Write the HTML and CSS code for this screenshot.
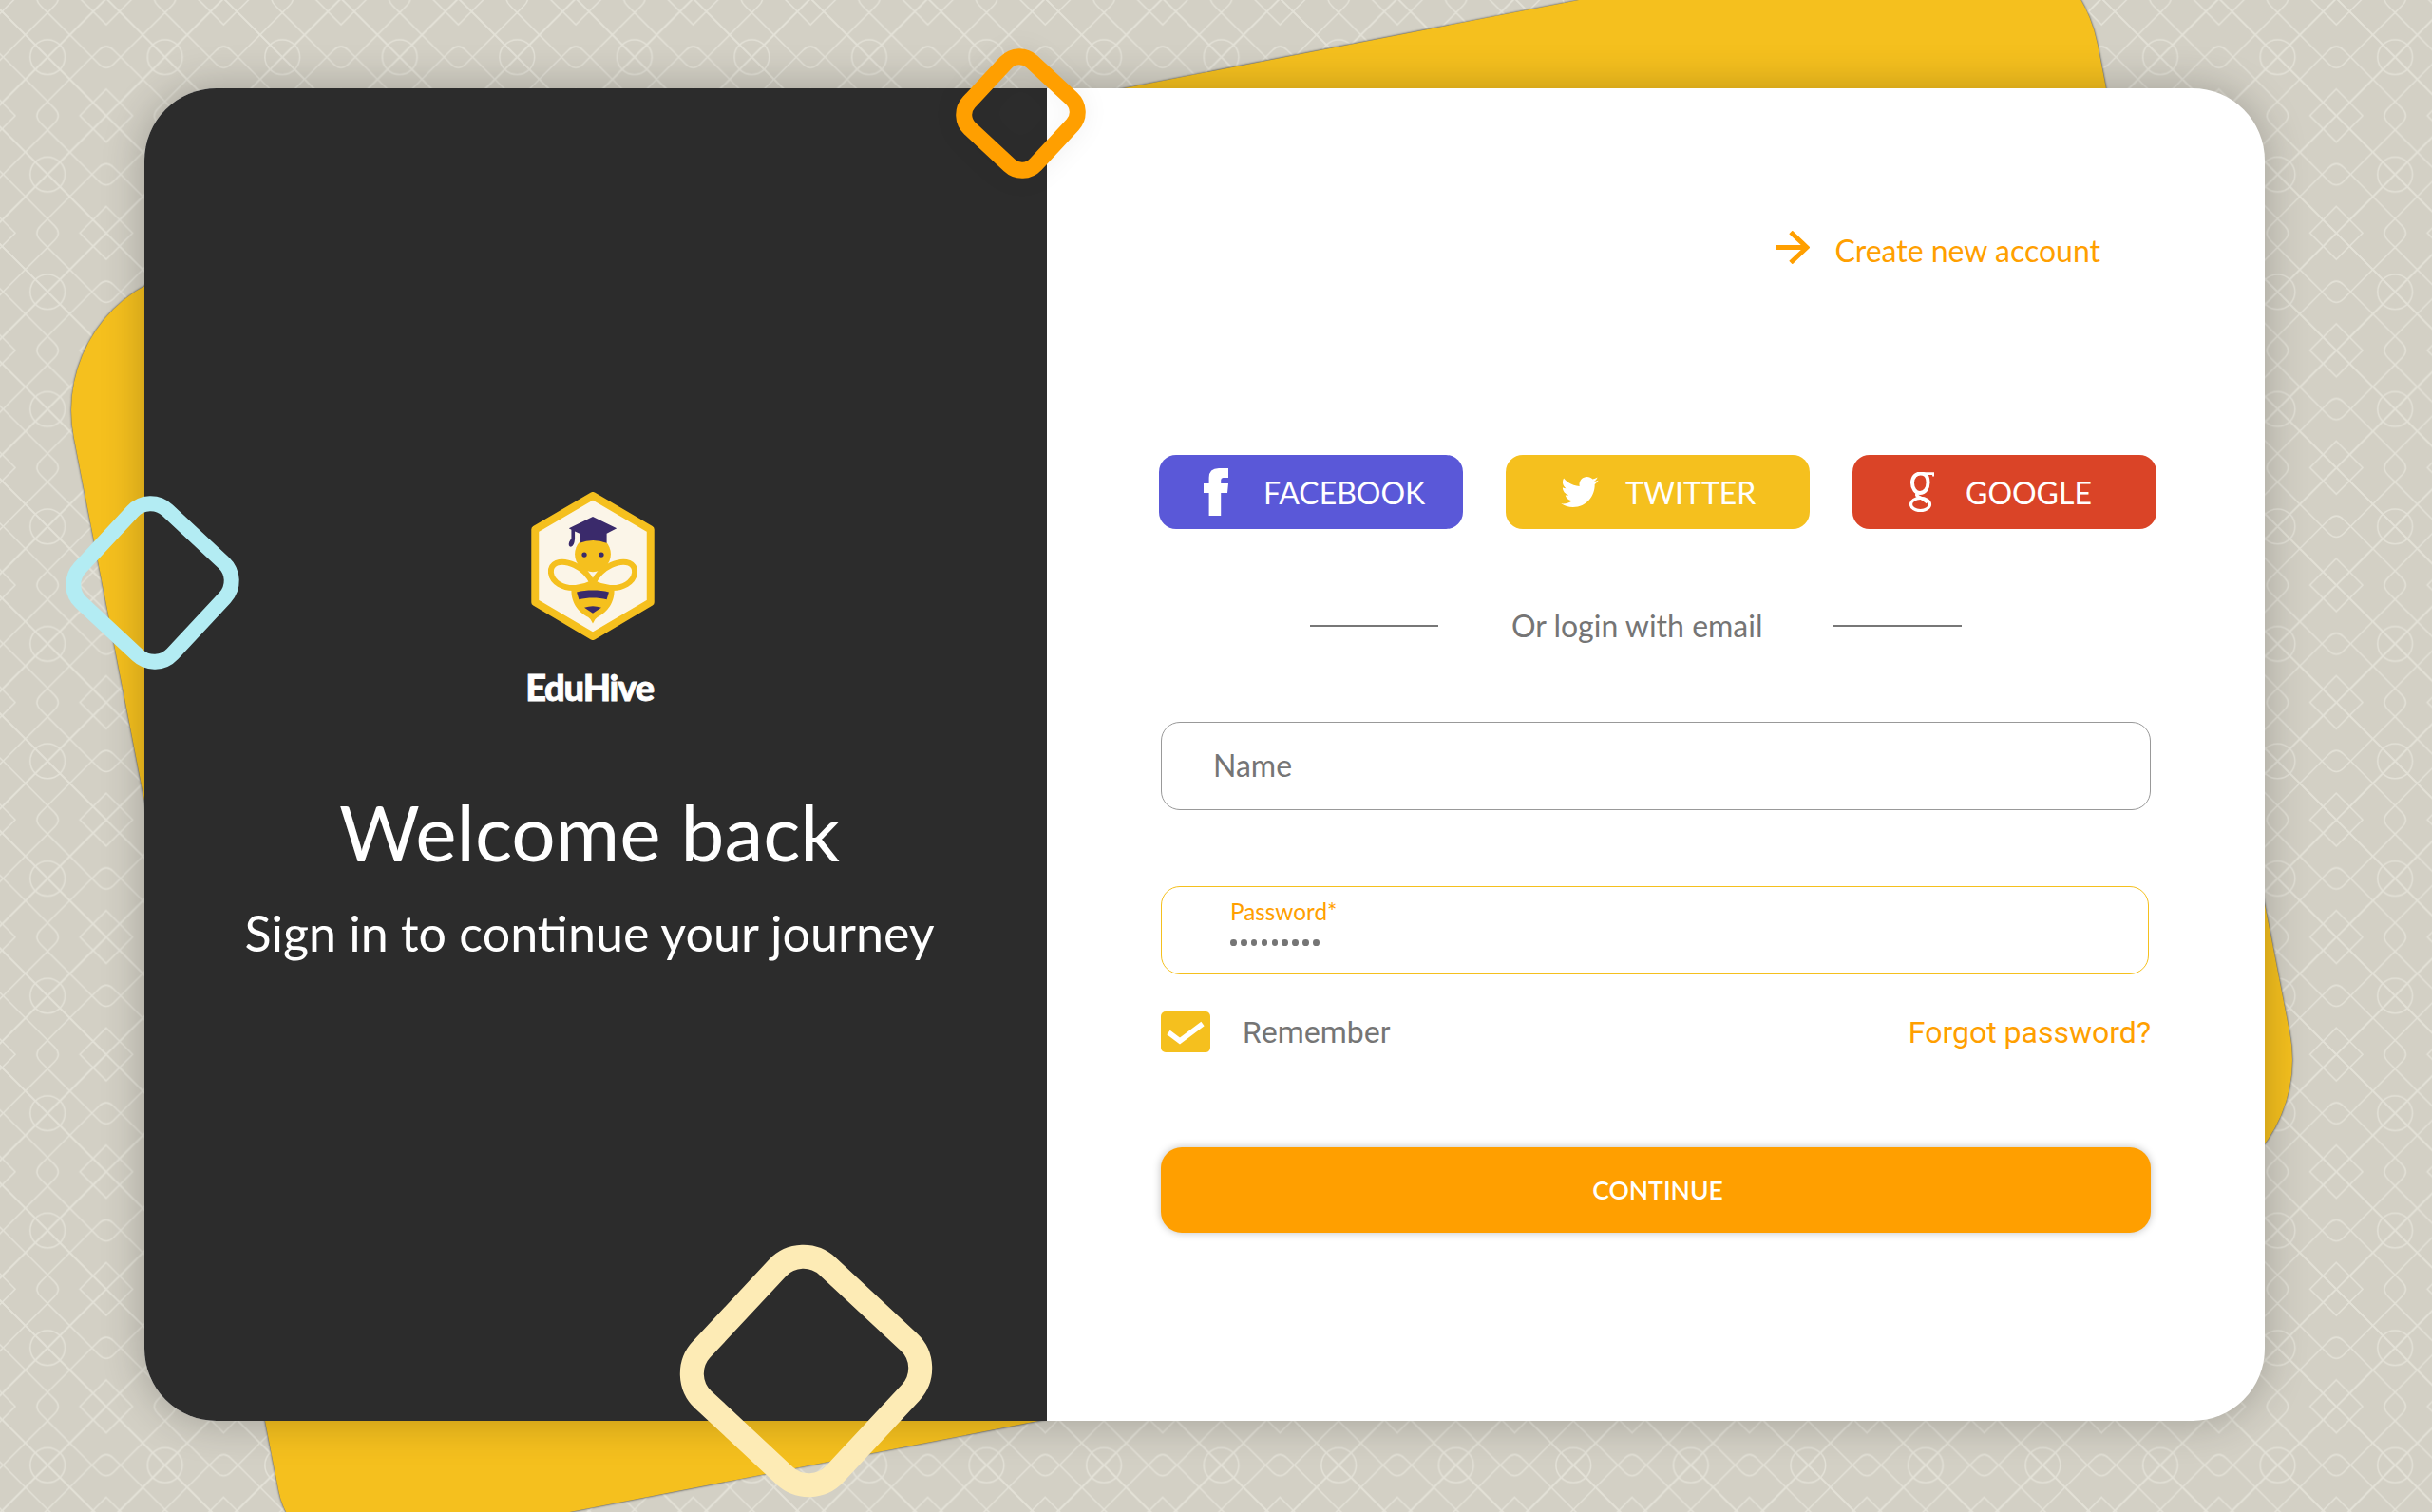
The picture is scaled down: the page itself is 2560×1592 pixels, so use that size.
FILE: index.html
```html
<!DOCTYPE html>
<html lang="en">
<head>
<meta charset="utf-8">
<title>EduHive</title>
<link rel="stylesheet" href="styles.css">
</head>
<body>
<div class="stage">
  <svg class="pattern" xmlns="http://www.w3.org/2000/svg" aria-hidden="true">
    <defs>
      <g id="motif">
        <path d="M-500 -470 L800 830 M800 -470 L-470 800"/>
        <circle cx="150" cy="180" r="55"/>
        <path d="M335 281 L418 365 L335 448 L252 365 Z"/>
        <path d="M10 180 L150 320 L290 180 M10 180 L150 40 L290 180"/>
        <path d="M150 320 L172 342 Q195 365 172 388 L150 410 L128 388 Q105 365 128 342 Z"/>
        <path d="M290 180 L312 158 Q335 135 358 158 L380 180 L358 202 Q335 225 312 202 Z"/>
      </g>
      <pattern id="tile" width="123.55" height="123.55" patternUnits="userSpaceOnUse">
        <g transform="scale(0.33392)" class="tile-lines">
          <use href="#motif" x="-370" y="-370"/>
          <use href="#motif" x="0" y="-370"/>
          <use href="#motif" x="370" y="-370"/>
          <use href="#motif" x="-370" y="0"/>
          <use href="#motif" x="0" y="0"/>
          <use href="#motif" x="370" y="0"/>
          <use href="#motif" x="-370" y="370"/>
          <use href="#motif" x="0" y="370"/>
          <use href="#motif" x="370" y="370"/>
        </g>
      </pattern>
    </defs>
    <rect width="100%" height="100%" fill="url(#tile)"/>
  </svg>

  <div class="back-shape"></div>

  <main class="card">
    <section class="brand">
      <svg class="logo" viewBox="178 113 390 470" xmlns="http://www.w3.org/2000/svg" role="img" aria-label="EduHive logo">
        <polygon points="373,125 556,232 556,463 373,571 190,463 190,232" fill="#fbf5e8" stroke="#f5c01e" stroke-width="24" stroke-linejoin="round"/>
        <circle cx="373" cy="310" r="57" fill="#f5c01e"/>
        <path d="M372 402 C345 345 285 328 258 338 C230 350 236 388 266 406 C298 425 340 418 372 402 Z" fill="#fbf5e8" stroke="#f5c01e" stroke-width="18" stroke-linejoin="round"/>
        <path d="M374 402 C401 345 461 328 488 338 C516 350 510 388 480 406 C448 425 406 418 374 402 Z" fill="#fbf5e8" stroke="#f5c01e" stroke-width="18" stroke-linejoin="round"/>
        <path d="M305 424 C340 403 405 403 441 424 C442 470 412 498 388 510 Q378 516 373 530 Q368 516 358 510 C334 498 304 470 305 424 Z" fill="#f5c01e"/>
        <path d="M322 431 C352 423 394 423 424 431 L417 454 C390 447 356 447 329 454 Z" fill="#3a2a6b"/>
        <path d="M346 480 Q373 470 400 480 L373 498 Z" fill="#3a2a6b"/>
        <path d="M297 228 L373 191 L449 228 L417 245 L417 275 Q373 258 331 275 L331 245 L316 238 L316 262 Q314 285 303 287 Q294 285 298 272 L305 260 L305 233 Z" fill="#3a2a6b"/>
        <circle cx="346" cy="312" r="8" fill="#3a2a6b"/>
        <circle cx="400" cy="312" r="8" fill="#3a2a6b"/>
      </svg>
      <div class="brand-name">EduHive</div>
      <h1 class="welcome">Welcome back</h1>
      <p class="tagline">Sign in to continue your journey</p>
    </section>

    <section class="form-panel">
      <a class="create-link">
        <svg class="arrow" viewBox="0 0 36 35" xmlns="http://www.w3.org/2000/svg" aria-hidden="true">
          <path d="M0 17.5 H33 M16 1.5 L33 17.5 L16 33.5" fill="none" stroke="#ff9f00" stroke-width="5"/>
        </svg>
        <span>Create new account</span>
      </a>

      <div class="socials">
        <button class="social facebook">
          <svg class="icon-f" viewBox="0 0 26 50" xmlns="http://www.w3.org/2000/svg" aria-hidden="true">
            <path d="M5.6 50 V26 H0 V16 H5.6 V10 Q5.6 0 16 0 H26 V10 H20.5 Q18.2 10 18.2 12.5 V16 H26 L25 26 H18.2 V50 Z" fill="#fff"/>
          </svg>
          <span>FACEBOOK</span>
        </button>
        <button class="social twitter">
          <svg class="icon-t" viewBox="0 48 512 416" xmlns="http://www.w3.org/2000/svg" aria-hidden="true">
            <path d="M459.37 151.716c.325 4.548.325 9.097.325 13.645 0 138.72-105.583 298.558-298.558 298.558-59.452 0-114.68-17.219-161.137-47.106 8.447.974 16.568 1.299 25.34 1.299 49.055 0 94.213-16.568 130.274-44.832-46.132-.975-84.792-31.188-98.112-72.772 6.498.974 12.995 1.624 19.818 1.624 9.421 0 18.843-1.3 27.614-3.573-48.081-9.747-84.143-51.98-84.143-102.985v-1.299c13.969 7.797 30.214 12.67 47.431 13.319-28.264-18.843-46.781-51.005-46.781-87.391 0-19.492 5.197-37.36 14.294-52.954 51.655 63.675 129.3 105.258 216.365 109.807-1.624-7.797-2.599-15.918-2.599-24.04 0-57.828 46.782-104.934 104.934-104.934 30.213 0 57.502 12.67 76.67 33.137 23.715-4.548 46.456-13.32 66.599-25.34-7.798 24.366-24.366 44.833-46.132 57.827 21.117-2.273 41.584-8.122 60.426-16.243-14.292 20.791-32.161 39.308-52.628 54.253z" fill="#fff"/>
          </svg>
          <span>TWITTER</span>
        </button>
        <button class="social google">
          <svg class="icon-g" viewBox="0 0 26 42" xmlns="http://www.w3.org/2000/svg" aria-hidden="true">
            <g fill="none" stroke="#fff">
              <path d="M14 1.8 C7 0.5 3 5 3 11.5 C3 17.5 6.5 22 11 22 C16.5 22 19.5 17 19.5 11 C19.5 6 17.5 2.5 14 1.8 Z" stroke-width="4"/>
              <path d="M14 1.6 H25.5 V4.5" stroke-width="2.8"/>
              <path d="M9 22 Q6 24 9.5 26 Q16 29 19 32" stroke-width="3.4"/>
              <ellipse cx="11.5" cy="34" rx="10" ry="6.6" stroke-width="3.2"/>
            </g>
          </svg>
          <span>GOOGLE</span>
        </button>
      </div>

      <div class="divider">
        <span class="rule rule-left"></span>
        <span class="divider-text">Or login with email</span>
        <span class="rule"></span>
      </div>

      <div class="field field-name">Name</div>

      <div class="field field-active">
        <span class="field-label">Password*</span>
        <span class="dots"><i></i><i></i><i></i><i></i><i></i><i></i><i></i><i></i><i></i></span>
      </div>

      <div class="options">
        <label class="remember">
          <span class="checkbox">
            <svg viewBox="0 0 52 43" xmlns="http://www.w3.org/2000/svg" aria-hidden="true">
              <path d="M8 22 L20 31 L44 13" fill="none" stroke="#fff" stroke-width="5.5"/>
            </svg>
          </span>
          <span>Remember</span>
        </label>
        <a class="forgot">Forgot password?</a>
      </div>

      <button class="continue">CONTINUE</button>
    </section>
  </main>

  <div class="diamond diamond-orange"></div>
  <div class="diamond diamond-cyan"></div>
  <div class="diamond diamond-cream"></div>
</div>
</body>
</html>
```

FILE: styles.css
```css
* { box-sizing: border-box; }

html, body {
  margin: 0;
  padding: 0;
  background: #d3d0c5;
}

.stage {
  position: relative;
  width: 2560px;
  height: 1592px;
  overflow: hidden;
  padding: 93px 0 0 152px;
  font-family: "Lato", "Liberation Sans", sans-serif;
}

.pattern {
  position: absolute;
  left: 0;
  top: 0;
  width: 2560px;
  height: 1592px;
}

.tile-lines {
  fill: none;
  stroke: #e3e1d7;
  stroke-width: 4.5;
}

.back-shape {
  position: absolute;
  left: 159px;
  top: 94px;
  width: 2170px;
  height: 1360px;
  border-radius: 150px 150px 150px 80px;
  background: #f5c01e;
  box-shadow: 0 0 2px 0.5px rgba(60, 60, 60, 0.75);
  transform: rotate(-11deg);
}

.card {
  position: relative;
  display: flex;
  width: 2232px;
  height: 1403px;
  border-radius: 76px;
  overflow: hidden;
  background: #fff;
  box-shadow: 0 0 46px rgba(0, 0, 0, 0.24);
}

.brand {
  display: flex;
  flex-direction: column;
  align-items: center;
  width: 950px;
  padding: 425px 13px 0 0;
  background: #2c2c2c;
  color: #fff;
}

.logo {
  display: block;
  width: 130px;
  height: 156px;
  margin-left: 7px;
}

.brand-name {
  margin-top: 26px;
  font-size: 38px;
  line-height: 46px;
  font-weight: 900;
  letter-spacing: -1.2px;
  -webkit-text-stroke: 0.8px #fff;
}

.welcome {
  margin: 79px 0 0;
  font-size: 82px;
  line-height: 100px;
  font-weight: 400;
}

.tagline {
  margin: 25px 0 0;
  font-size: 52px;
  line-height: 64px;
  font-weight: 400;
}

.form-panel {
  display: flex;
  flex-direction: column;
  flex: 1;
  padding: 153px 0 0 118px;
}

.create-link {
  display: flex;
  align-items: center;
  align-self: flex-end;
  gap: 26px;
  height: 36px;
  margin-right: 173px;
  color: #ff9f00;
  font-size: 32px;
  line-height: 36px;
}

.arrow {
  display: block;
  width: 36px;
  height: 35px;
  margin-top: -8px;
}

.socials {
  display: flex;
  gap: 45px;
  margin-top: 197px;
}

.social {
  display: flex;
  align-items: center;
  width: 320px;
  height: 78px;
  padding: 0;
  border: 0;
  border-radius: 18px;
  color: #fff;
  font-family: "Lato", sans-serif;
  font-size: 32px;
  font-weight: 400;
}

.facebook { background: #5a58d8; padding-left: 47px; gap: 37px; }
.twitter { background: #f5c01e; padding-left: 58px; gap: 28px; }
.google { background: #da4427; padding-left: 60px; gap: 33px; }

.icon-f { width: 26px; height: 50px; display: block; }
.icon-t { width: 40px; height: 32px; display: block; }
.icon-g { width: 26px; height: 42px; display: block; }

.divider {
  display: flex;
  align-items: center;
  gap: 75px;
  margin: 80px 0 0 159px;
  color: #757575;
  font-size: 32px;
  line-height: 44px;
}

.rule {
  width: 135px;
  height: 2px;
  background: #777;
}

.rule-left { margin-right: 2px; }

.field {
  display: flex;
  align-items: center;
  width: 1042px;
  height: 93px;
  margin: 79px 0 0 2px;
  padding-left: 54px;
  border: 1.5px solid #999;
  border-radius: 20px;
  color: #757575;
  font-size: 32px;
}

.field-name { padding-bottom: 2px; }

.field-active {
  display: block;
  width: 1040px;
  margin-top: 80px;
  padding-left: 72px;
  padding-top: 11px;
  border-color: #f5c01e;
}

.field-label {
  display: block;
  color: #ff9f00;
  font-size: 24.3px;
  line-height: 30px;
}

.dots {
  display: flex;
  gap: 4.2px;
  margin-top: 14px;
}

.dots i {
  width: 6.7px;
  height: 6.7px;
  border-radius: 50%;
  background: #757575;
}

.options {
  display: flex;
  align-items: center;
  justify-content: space-between;
  width: 1042px;
  height: 43px;
  margin: 39px 0 0 2px;
  font-family: "Roboto", sans-serif;
  font-size: 32px;
}

.remember {
  display: flex;
  align-items: center;
  gap: 34px;
  color: #757575;
}

.checkbox {
  display: block;
  width: 52px;
  height: 43px;
  border-radius: 5px;
  background: #f5c01e;
}

.checkbox svg {
  display: block;
  width: 52px;
  height: 43px;
}

.forgot { color: #ff9f00; }

.continue {
  display: block;
  width: 1042px;
  height: 90px;
  margin: 100px 0 0 2px;
  border: 0;
  border-radius: 22px;
  background: #ff9f00;
  box-shadow: 0 0 8px rgba(0, 0, 0, 0.25);
  color: #fff;
  font-family: "Lato", sans-serif;
  font-size: 26.5px;
  font-weight: 600;
  padding: 0 0 0 4px;
}

.diamond {
  position: absolute;
  transform: rotate(43deg);
}

.diamond-orange {
  left: 1017.5px;
  top: 62.5px;
  width: 113px;
  height: 113px;
  border: 17px solid #ff9f00;
  border-radius: 28px;
  box-shadow: 0 0 30px rgba(0, 0, 0, 0.06), inset 0 0 30px rgba(0, 0, 0, 0.04);
}

.diamond-cyan {
  left: 86px;
  top: 539px;
  width: 149px;
  height: 149px;
  border: 16px solid #b3ecf3;
  border-radius: 34px;
}

.diamond-cream {
  left: 740px;
  top: 1335px;
  width: 217px;
  height: 217px;
  border: 25px solid #fdebb5;
  border-radius: 50px;
}
```
